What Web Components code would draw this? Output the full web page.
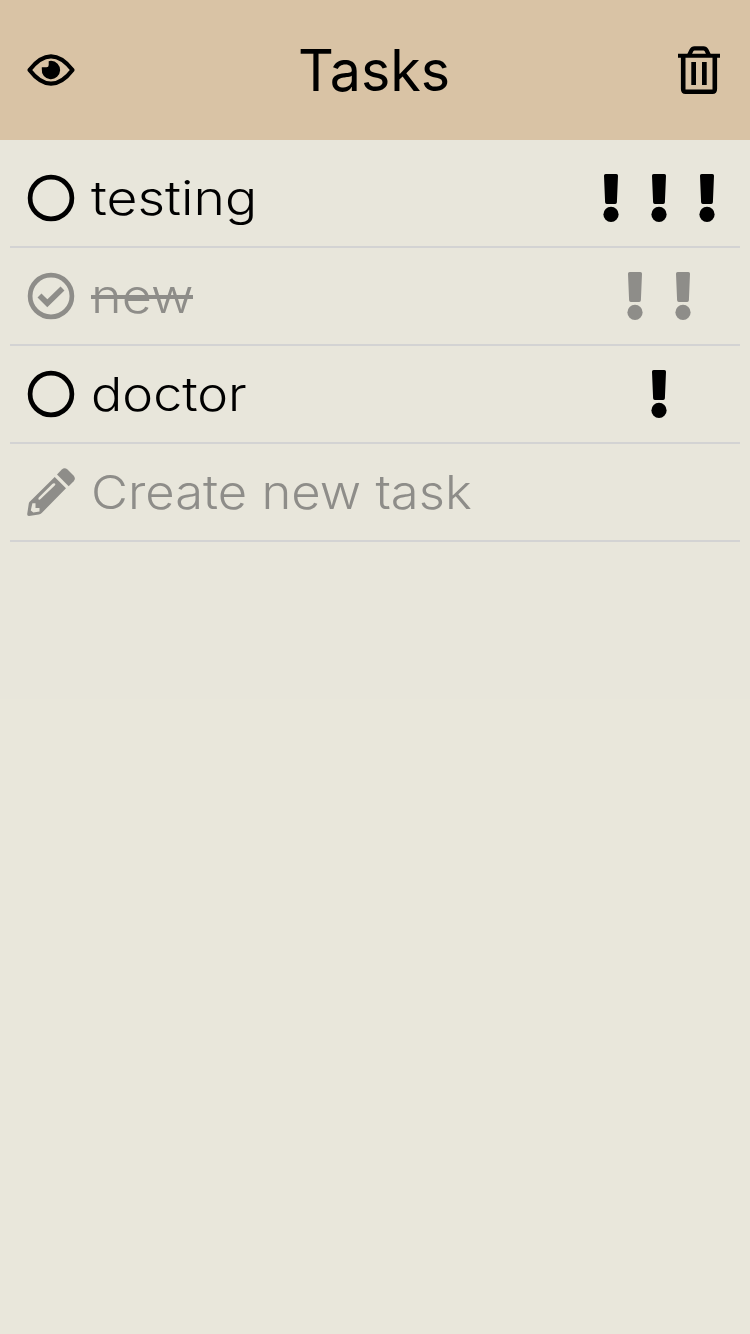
<!DOCTYPE html>
<html lang="en">
<head>
<meta charset="utf-8">
<title>Tasks</title>
<style>
html,body{margin:0;height:100%;background:#e9e7db}
body{font-family:Inter,"Liberation Sans",sans-serif;color:#000;overflow:hidden}
</style>
</head>
<body>
<task-app></task-app>
<script>
const icons = {
eye:'<path d="M2.500 24Q13 10.300 24 10.300Q35 10.300 45.500 24Q35 37.700 24 37.700Q13 37.700 2.500 24Z" fill="none" stroke="currentColor" stroke-width="4.200" stroke-linejoin="round"/><path d="M24 14.800A9.200 9.200 0 1 1 14.800 23V21.200H19.500Q21.700 21.200 21.700 19V15.200Q22.500 14.800 24 14.800Z"/>',
trash:'<g fill="none" stroke="currentColor" stroke-width="4.600"><path d="M5.200 10V43Q5.200 45.700 7.500 45.700H34.500Q36.800 45.700 36.800 43V10"/><path d="M2 9.800H40" stroke-width="4" stroke-linecap="square"/><path d="M11 9.500L13.500 4.200Q14.500 2.300 16.500 2.300H25.500Q27.500 2.300 28.500 4.200L31 9.500" stroke-width="4.200"/></g><path d="M13.300 16H18V39H13.300ZM24 16H28.700V39H24Z"/>',
open:'<circle cx="24" cy="24" r="20.900" fill="none" stroke="currentColor" stroke-width="4.700"/>',
done:'<circle cx="24" cy="24" r="20.900" fill="none" stroke="currentColor" stroke-width="4.700"/><path d="M12.500 23.500L20.300 31.300L35.500 16.500" fill="none" stroke="currentColor" stroke-width="5.600" stroke-linejoin="miter"/>',
bang:'<path d="M18.700 0H29.300Q31.100 0 31 1.800L29.900 28.300Q29.800 30 28.200 30H19.800Q18.200 30 18.100 28.300L17 1.800Q16.900 0 18.700 0Z"/><circle cx="24" cy="40.400" r="7.600"/>',
pencil:'<path fill-rule="evenodd" d="M27.700 9L39 20.300L14.700 45Q13.500 46.200 11.800 46.400L2 47.900Q0 48 .2 46L1.800 35.600Q2 34.200 3.200 33.200ZM27 15.200Q26 15.200 25.300 16L12 29.300Q11 30.600 11.600 31.400Q12.600 32 13.600 31L27.500 17.800Q28.700 16.600 28.200 15.700Q27.700 15.100 27 15.200ZM5.400 35.200L3.800 42.400L6.300 44.600L12.500 43.500V40H8.500V35.200Z"/><path d="M30 6.500L34.800 1.500Q37.500-1 40.500 1.500L46.500 7.500Q49.200 10.500 46.700 13.200L41.700 18.200Z"/>'
};
customElements.define('task-icon', class extends HTMLElement {
  connectedCallback(){
    const root=this.attachShadow({mode:'open'});
    root.innerHTML=`<style>:host{display:block;width:48px;height:48px;flex:none}svg{display:block;overflow:visible}</style><svg width="48" height="48" viewBox="0 0 48 48" fill="currentColor" aria-hidden="true">${icons[this.getAttribute('name')]}</svg>`;
  }
});
/* A label whose glyphs stretch to a given advance width. */
customElements.define('wide-label', class extends HTMLElement {
  connectedCallback(){
    const root=this.attachShadow({mode:'open'});
    const w=+this.getAttribute('width');
    root.innerHTML=`<style>:host{display:block;width:${w}px;white-space:nowrap}span{display:inline-block;transform-origin:0 50%}</style><span><slot></slot></span>`;
    const s=root.querySelector('span');
    s.style.transform=`scaleX(${w/s.offsetWidth})`;
  }
});
customElements.define('task-header', class extends HTMLElement {
  connectedCallback(){
    this.attachShadow({mode:'open'}).innerHTML=`<style>
:host{display:grid;grid-template-columns:48px 1fr 48px;box-sizing:border-box;height:140px;padding:0 24px 0 27px;background:#d9c3a5;align-items:center}
wide-label{font-size:57px;line-height:70px;font-weight:400;justify-self:center;padding:2px 5px 0 0}
</style><task-icon name="eye"></task-icon><wide-label width="152"><slot></slot></wide-label><task-icon name="trash"></task-icon>`;
  }
});
customElements.define('task-row', class extends HTMLElement {
  connectedCallback(){
    const n=+this.getAttribute('priority')||0;
    this.attachShadow({mode:'open'}).innerHTML=`<style>
:host{display:flex;box-sizing:border-box;height:98px;padding:0 9px 0 17px;align-items:center;border-bottom:2px solid #d3d3d3}
:host([muted]){color:#8e8d89}
wide-label{margin-left:16px;font-size:47px;line-height:60px;font-weight:300}
:host([struck]) wide-label{background:linear-gradient(currentColor,currentColor) 0 29px/100% 4px no-repeat}
.priority{margin-left:auto;width:144px;display:flex;justify-content:center}
</style><task-icon name="${this.getAttribute('icon')}"></task-icon><wide-label width="${this.getAttribute('width')}"><slot></slot></wide-label><div class="priority">${'<task-icon name="bang"></task-icon>'.repeat(n)}</div>`;
  }
});
customElements.define('task-app', class extends HTMLElement {
  connectedCallback(){
    this.attachShadow({mode:'open'}).innerHTML=`<style>
:host{display:block}main{padding:10px 10px 0;height:549px;background:#e8e6db}
</style><task-header>Tasks</task-header><main>
<task-row icon="open" width="166" priority="3">testing</task-row>
<task-row icon="done" width="102" priority="2" muted struck>new</task-row>
<task-row icon="open" width="156" priority="1">doctor</task-row>
<task-row icon="pencil" width="381" muted>Create new task</task-row>
</main>`;
  }
});
</script>
</body>
</html>
